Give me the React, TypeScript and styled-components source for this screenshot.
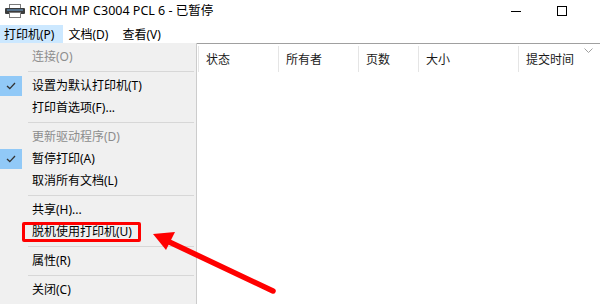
import styled, { createGlobalStyle } from "styled-components";

const GlobalStyle = createGlobalStyle`
  html, body {
    margin: 0;
    padding: 0;
    background: #ffffff;
  }
  body {
    font-family: "Noto Sans", "Noto Sans CJK SC", sans-serif;
  }
`;

const Window = styled.div`
  position: relative;
  width: 600px;
  height: 304px;
  overflow: hidden;
  background: #ffffff;
  display: flex;
  flex-direction: column;
  font-size: 12px;
  color: #000000;
`;

const TitleBar = styled.div`
  height: 22px;
  display: flex;
  align-items: center;
  padding-left: 5px;
  gap: 4px;
`;

const Title = styled.div`
  flex: 1;
  font-size: 12.5px;
  line-height: 22px;
  color: #000;
  white-space: nowrap;
`;

const Controls = styled.div`
  display: flex;
  align-self: stretch;
  margin-right: -31px;
`;

const ControlButton = styled.div`
  width: 46px;
  display: flex;
  align-items: center;
  justify-content: center;
`;

const MenuBar = styled.div`
  height: 21px;
  display: flex;
  align-items: flex-end;
  gap: 1px;
`;

const MenuBarItem = styled.div<{ $open?: boolean }>`
  height: 18px;
  display: flex;
  align-items: center;
  padding: 0 8px 0 3px;
  box-sizing: border-box;
  background: ${(p) => (p.$open ? "#cce8ff" : "transparent")};
  border: 1px solid ${(p) => (p.$open ? "#cce8ff" : "transparent")};
  white-space: nowrap;
`;

const Body = styled.div`
  flex: 1;
  position: relative;
`;

const ListHeader = styled.div`
  display: grid;
  grid-template-columns: 198px 80px 80px 60px 100px 1fr;
  height: 29px;
  border-top: 1px solid #a0a0a0;
`;

const HeaderCell = styled.div<{ $first?: boolean }>`
  display: flex;
  align-items: center;
  padding-left: 7px;
  border-left: ${(p) => (p.$first ? "none" : "1px solid #e5e5e5")};
  margin: 2px 0 1px;
  color: #1a1a1a;
  position: relative;
  white-space: nowrap;
`;

const SortGlyph = styled.svg`
  position: absolute;
  right: 7px;
  top: 2px;
`;

const Popup = styled.div`
  position: absolute;
  left: 0;
  top: 0;
  width: 196px;
  bottom: 0;
  background: #f0f0f0;
  border-right: 1px solid #cccccc;
  padding-top: 3px;
  box-sizing: content-box;
`;

const Item = styled.div<{ $disabled?: boolean }>`
  height: 22px;
  display: flex;
  align-items: center;
  color: ${(p) => (p.$disabled ? "#8d8d8d" : "#000")};
  white-space: nowrap;
`;

const CheckCell = styled.div<{ $checked?: boolean }>`
  width: 22px;
  height: 20px;
  margin-right: 10px;
  display: flex;
  align-items: center;
  justify-content: center;
  background: ${(p) => (p.$checked ? "#91c9f7" : "transparent")};
`;

const Label = styled.span<{ $marked?: boolean }>`
  line-height: 14px;
  ${(p) =>
    p.$marked &&
    `
    border: 3px solid #ff0000;
    border-radius: 2px;
    padding: 0 6px 0 7px;
    margin-left: -10px;
  `}
`;

const Separator = styled.div`
  height: 7px;
  display: flex;
  align-items: center;
  padding: 0 2px 0 28px;
  &::after {
    content: "";
    flex: 1;
    height: 1px;
    background: #d7d7d7;
  }
`;

const Annotation = styled.svg`
  position: absolute;
  left: 0;
  top: 0;
  pointer-events: none;
`;

type Entry =
  | { sep: true }
  | { label: string; checked?: boolean; disabled?: boolean; marked?: boolean };

const entries: Entry[] = [
  { label: "连接(O)", disabled: true },
  { sep: true },
  { label: "设置为默认打印机(T)", checked: true },
  { label: "打印首选项(F)..." },
  { sep: true },
  { label: "更新驱动程序(D)", disabled: true },
  { label: "暂停打印(A)", checked: true },
  { label: "取消所有文档(L)" },
  { sep: true },
  { label: "共享(H)..." },
  { label: "脱机使用打印机(U)", marked: true },
  { sep: true },
  { label: "属性(R)" },
  { sep: true },
  { label: "关闭(C)" },
];

// first column (document name) sits under the open menu
const columns = ["", "状态", "所有者", "页数", "大小", "提交时间"];

function PrinterIcon() {
  return (
    <svg width="20" height="14" viewBox="0 0 20 14">
      <rect x="4.5" y="0.5" width="11" height="4" fill="#fff" stroke="#7a7a7a" />
      <rect x="0" y="4" width="20" height="6" rx="1" fill="#3c3c3c" />
      <rect x="2" y="5.5" width="16" height="1" fill="#6fa8dc" />
      <rect x="4.5" y="8.5" width="11" height="5" fill="#fff" stroke="#7a7a7a" />
    </svg>
  );
}

function Check() {
  return (
    <svg width="10" height="8" viewBox="0 0 10 8">
      <path d="M1 4 L3.8 6.6 L9 1" fill="none" stroke="#333" strokeWidth="1.3" />
    </svg>
  );
}

export default function App() {
  return (
    <>
      <GlobalStyle />
      <Window>
        <TitleBar>
          <PrinterIcon />
          <Title>RICOH MP C3004 PCL 6 - 已暂停</Title>
          <Controls>
            <ControlButton>
              <svg width="10" height="1">
                <rect width="10" height="1" fill="#000" />
              </svg>
            </ControlButton>
            <ControlButton>
              <svg width="10" height="10">
                <rect x="0.5" y="0.5" width="9" height="9" fill="none" stroke="#000" />
              </svg>
            </ControlButton>
            <ControlButton>
              <svg width="10" height="10">
                <path d="M0 0 L10 10 M10 0 L0 10" stroke="#000" />
              </svg>
            </ControlButton>
          </Controls>
        </TitleBar>
        <MenuBar>
          <MenuBarItem $open>打印机(P)</MenuBarItem>
          <MenuBarItem>文档(D)</MenuBarItem>
          <MenuBarItem>查看(V)</MenuBarItem>
        </MenuBar>
        <Body>
          <ListHeader>
            {columns.map((c, i) => (
              <HeaderCell key={i} $first={i === 0}>
                {c}
                {i === columns.length - 1 && (
                  <SortGlyph width="9" height="5" viewBox="0 0 9 5">
                    <path d="M0.5 0.5 L4.5 4.5 L8.5 0.5" fill="none" stroke="#a0a0a0" />
                  </SortGlyph>
                )}
              </HeaderCell>
            ))}
          </ListHeader>
          <Popup>
            {entries.map((e, i) =>
              "sep" in e ? (
                <Separator key={i} />
              ) : (
                <Item key={i} $disabled={e.disabled}>
                  <CheckCell $checked={e.checked}>{e.checked && <Check />}</CheckCell>
                  <Label $marked={e.marked}>{e.label}</Label>
                </Item>
              )
            )}
          </Popup>
        </Body>
        <Annotation width="600" height="304" viewBox="0 0 600 304">
          <line x1="273" y1="291" x2="163" y2="239" stroke="#ff0000" strokeWidth="5.5" strokeLinecap="round" />
          <polygon points="153,234 175,232 166,250" fill="#ff0000" />
        </Annotation>
      </Window>
    </>
  );
}
